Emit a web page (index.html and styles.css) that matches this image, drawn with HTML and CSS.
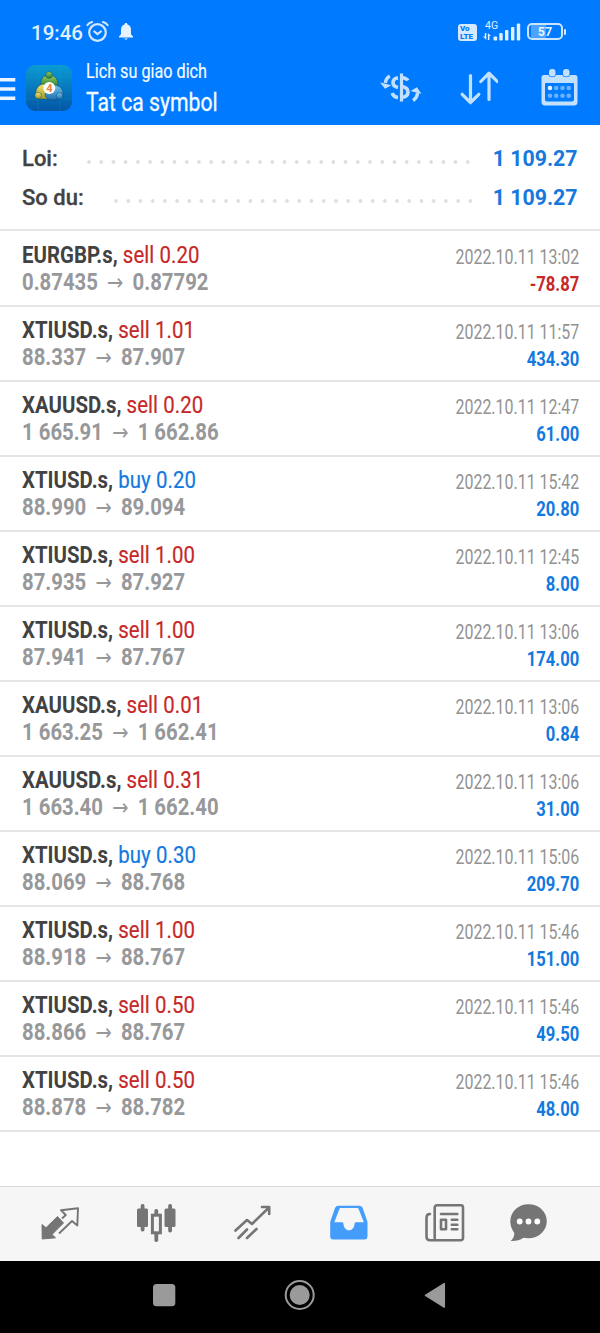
FILE: index.html
```html
<!DOCTYPE html>
<html lang="vi">
<head>
<meta charset="utf-8">
<title>Lich su giao dich</title>
<link rel="stylesheet" href="styles.css">
</head>
<body>
<header class="top">
  <div class="status">
    <span class="clock">19:46</span>
    <svg class="alarm" width="24" height="24" viewBox="0 0 24 24" fill="none" stroke="#d3e8ff" stroke-width="2.2" stroke-linecap="round"><circle cx="11.500" cy="12.500" r="8.300"/><path d="M8.300 11.500l3.200 2.600 3.400-2.600"/><path d="M1.500 5Q3 2.800 6 2M21.500 5Q20 2.800 17 2"/></svg>
    <svg class="bell" width="14" height="18" viewBox="0 0 14 18" fill="#e6f3ff"><path d="M7 0c1 0 1.500.6 1.500 1.600C11 2.300 12 4.300 12 7v4.200l2 2.300v1H0v-1l2-2.300V7c0-2.700 1-4.700 3.500-5.400C5.500.6 6 0 7 0zM5.300 15.600h3.400c-.4 1.500-3 1.500-3.400 0z"/></svg>
    <span class="volte"><span>Vo</span><span>LTE</span></span>
    <span class="signal">
      <span class="net">4G</span>
      <svg width="38" height="19" viewBox="0 0 38 19" fill="#e0f0ff"><path d="M0 14.500h1.800V11h1.500v7zM8 14h-1.600v4H4.900v-7z"/><rect x="10.500" y="14.500" width="3.700" height="4" rx="1"/><rect x="16.300" y="11" width="3.400" height="7.500" rx="1"/><rect x="22" y="8" width="3.400" height="10.500" rx="1"/><rect x="28" y="5" width="3.400" height="13.500" rx="1"/><rect x="33.800" y="1.500" width="3.400" height="17" rx="1"/></svg>
    </span>
    <span class="battery"><span>57</span></span><span class="nub"></span>
  </div>
  <div class="bar">
    <svg class="menu" width="16" height="24" viewBox="0 0 16 24" fill="#e9f4ff"><path d="M0 0h15.300v3.600H0zM0 9.200h15.300v3.600H0zM0 18.500h15.300v3.600H0z"/></svg>
    <svg class="logo" width="46" height="46" viewBox="0 0 46 46">
      <defs>
        <linearGradient id="bg" x1="0" y1="0" x2="0" y2="1"><stop offset="0" stop-color="#0a9cd3"/><stop offset="1" stop-color="#0457a6"/></linearGradient>
        <linearGradient id="gr" x1="0" y1="0" x2="0" y2="1"><stop offset="0" stop-color="#a3d05a"/><stop offset="1" stop-color="#1f7a3c"/></linearGradient>
        <linearGradient id="ye" x1="0" y1="0" x2="0" y2="1"><stop offset="0" stop-color="#f0e46c"/><stop offset="1" stop-color="#a39a2a"/></linearGradient>
        <linearGradient id="bl" x1="0" y1="0" x2="0" y2="1"><stop offset="0" stop-color="#74c5ef"/><stop offset="1" stop-color="#1d6faf"/></linearGradient>
      </defs>
      <rect width="46" height="46" rx="9" fill="url(#bg)"/>
      <path d="M12 0v46M34 0v46M0 12h46M0 34h46" stroke="#1cb2dc" stroke-opacity=".3" stroke-width=".6"/>
      <g stroke="#06456f" stroke-opacity=".7" stroke-width=".7">
        <path d="M15 22c-1.500-7 2-12 8-12s10 5 9 12z" fill="url(#gr)"/><circle cx="23" cy="10" r="3.300" fill="url(#gr)"/>
        <path d="M22 34H13c-3 0-4-4-3-8s4-7 8-7l6 8z" fill="url(#ye)"/><circle cx="12.200" cy="30.500" r="3.300" fill="url(#ye)"/>
        <path d="M19 29l9-9c5 0 9 4 9 8 0 4-5 7-10 7-4 0-8-2-8-6z" fill="url(#bl)"/><circle cx="33.500" cy="31" r="3.300" fill="url(#bl)"/>
      </g>
      <circle cx="23.300" cy="23" r="6" fill="#fff"/>
      <text x="23.300" y="27" text-anchor="middle" class="four">4</text>
    </svg>
    <div class="titles"><div class="t1"><span>Lich su giao dich</span></div><div class="t2"><span>Tat ca symbol</span></div></div>
    <svg class="dollar" width="42" height="34" viewBox="0 0 42 34" fill="none" stroke="#c3e1ff"><path d="M21.500 2.500v28" stroke-width="3.200" stroke-linecap="butt"/><path d="M27.800 9.500Q26.500 7 22 6.700M22 15.500Q28 16.500 28 21T22 26.500" stroke-width="3.600"/><path d="M18 6.700Q13 7.500 13 11.500t5 5M12.300 22q1 4 5.700 4.500" stroke-width="3.600"/><path d="M9.800 5Q6 7 5.300 12M33 29.500Q37 27 37.500 22" stroke-width="3.400"/><path d="M0 11.500l5 6.200 6.300-3.500zM41.500 23l-4.500-6.700-6.500 3.700z" fill="#c3e1ff" stroke="none"/></svg>
    <svg class="sort" width="38" height="34" viewBox="0 0 38 34" fill="none" stroke="#c3e1ff" stroke-width="3.200" stroke-linecap="round" stroke-linejoin="round"><path d="M10.500 4.500v27M2.200 23.300l8.300 8.400 8.300-8.400M29 28.500V2.500M20.800 10.500L29 2.200l8.200 8.300"/></svg>
    <svg class="cal" width="37" height="38" viewBox="0 0 37 38"><path fill="#c3e1ff" fill-rule="evenodd" d="M3 7h4.500c1 3 6.500 3 7.500 0h6.500c1 3 6.500 3 7.500 0H34q2.500 0 2.500 2.500V34q0 3.500-3.500 3.500H4Q.5 37.500.5 34V9.500Q.5 7 3 7zM4 16v15.500q0 2 2 2h25q2 0 2-2V16q0-1-1-1H5q-1 0-1 1z"/><rect x="8" y="1" width="6.500" height="7.500" rx="3" fill="#c3e1ff"/><rect x="22" y="1" width="6.500" height="7.500" rx="3" fill="#c3e1ff"/><g fill="#69b2ff"><circle cx="9" cy="20" r="2.300" fill="#e4f2ff"/><circle cx="15.200" cy="20" r="2.300"/><circle cx="21.500" cy="20" r="2.300"/><circle cx="27.700" cy="20" r="2.300"/><circle cx="9" cy="27.700" r="2.300"/><circle cx="15.200" cy="27.700" r="2.300"/><circle cx="21.500" cy="27.700" r="2.300"/><circle cx="27.700" cy="27.700" r="2.300"/></g></svg>
  </div>
</header>
<section class="summary">
  <div class="sum"><span class="label loi">Loi:</span><i class="dots d32"></i><b>1 109.27</b></div>
  <div class="sum"><span class="label du">So du:</span><i class="dots d30"></i><b>1 109.27</b></div>
</section>
<main class="deals">
  <div class="deal first"><div class="l"><p class="sym"><b>EURGBP.s,</b> <span class="sell">sell 0.20</span></p><p class="price">0.87435<i>→</i>0.87792</p></div><div class="r"><p class="date">2022.10.11 13:02</p><p class="val neg">-78.87</p></div></div>
  <div class="deal"><div class="l"><p class="sym"><b>XTIUSD.s,</b> <span class="sell">sell 1.01</span></p><p class="price">88.337<i>→</i>87.907</p></div><div class="r"><p class="date">2022.10.11 11:57</p><p class="val">434.30</p></div></div>
  <div class="deal"><div class="l"><p class="sym"><b>XAUUSD.s,</b> <span class="sell">sell 0.20</span></p><p class="price">1 665.91<i>→</i>1 662.86</p></div><div class="r"><p class="date">2022.10.11 12:47</p><p class="val">61.00</p></div></div>
  <div class="deal"><div class="l"><p class="sym"><b>XTIUSD.s,</b> <span class="buy">buy 0.20</span></p><p class="price">88.990<i>→</i>89.094</p></div><div class="r"><p class="date">2022.10.11 15:42</p><p class="val">20.80</p></div></div>
  <div class="deal"><div class="l"><p class="sym"><b>XTIUSD.s,</b> <span class="sell">sell 1.00</span></p><p class="price">87.935<i>→</i>87.927</p></div><div class="r"><p class="date">2022.10.11 12:45</p><p class="val">8.00</p></div></div>
  <div class="deal"><div class="l"><p class="sym"><b>XTIUSD.s,</b> <span class="sell">sell 1.00</span></p><p class="price">87.941<i>→</i>87.767</p></div><div class="r"><p class="date">2022.10.11 13:06</p><p class="val">174.00</p></div></div>
  <div class="deal"><div class="l"><p class="sym"><b>XAUUSD.s,</b> <span class="sell">sell 0.01</span></p><p class="price">1 663.25<i>→</i>1 662.41</p></div><div class="r"><p class="date">2022.10.11 13:06</p><p class="val">0.84</p></div></div>
  <div class="deal"><div class="l"><p class="sym"><b>XAUUSD.s,</b> <span class="sell">sell 0.31</span></p><p class="price">1 663.40<i>→</i>1 662.40</p></div><div class="r"><p class="date">2022.10.11 13:06</p><p class="val">31.00</p></div></div>
  <div class="deal"><div class="l"><p class="sym"><b>XTIUSD.s,</b> <span class="buy">buy 0.30</span></p><p class="price">88.069<i>→</i>88.768</p></div><div class="r"><p class="date">2022.10.11 15:06</p><p class="val">209.70</p></div></div>
  <div class="deal"><div class="l"><p class="sym"><b>XTIUSD.s,</b> <span class="sell">sell 1.00</span></p><p class="price">88.918<i>→</i>88.767</p></div><div class="r"><p class="date">2022.10.11 15:46</p><p class="val">151.00</p></div></div>
  <div class="deal"><div class="l"><p class="sym"><b>XTIUSD.s,</b> <span class="sell">sell 0.50</span></p><p class="price">88.866<i>→</i>88.767</p></div><div class="r"><p class="date">2022.10.11 15:46</p><p class="val">49.50</p></div></div>
  <div class="deal"><div class="l"><p class="sym"><b>XTIUSD.s,</b> <span class="sell">sell 0.50</span></p><p class="price">88.878<i>→</i>88.782</p></div><div class="r"><p class="date">2022.10.11 15:46</p><p class="val">48.00</p></div></div>
</main>
<nav class="tabs">
  <svg width="38" height="34" viewBox="0 0 38 34"><path fill="#757575" stroke="#757575" stroke-linejoin="round" d="M1 17.500l4 3.300L16.500 9.500l6 6.500L11 27.500l3.500 3.300L1.200 32z"/><path d="M18 26.500L31 14l5.300 4.500L37 1.200 20 3.300 24.800 8 21 11.500" fill="none" stroke="#757575" stroke-width="1.900" stroke-linejoin="round"/></svg>
  <svg width="40" height="39" viewBox="0 0 40 39"><g fill="#757575"><rect x="0" y="4.500" width="11" height="18.500" rx="1.500"/><rect x="3.700" y="0" width="3.800" height="27.500" rx="1.700"/><rect x="27.500" y="4.500" width="11" height="18.500" rx="1.500"/><rect x="31.200" y="0" width="3.800" height="28.500" rx="1.700"/><rect x="17.400" y="5" width="3.800" height="6" rx="1.700"/><rect x="17.400" y="28.500" width="3.800" height="9.500" rx="1.700"/></g><rect x="15.400" y="11.200" width="8" height="17.600" fill="none" stroke="#757575" stroke-width="3"/></svg>
  <svg width="38" height="36" viewBox="0 0 38 36" fill="none" stroke="#757575" stroke-width="2.600" stroke-linecap="round" stroke-linejoin="round"><path d="M1.500 25.500L13 15l5 4L35 2.500M28 2h7.200V9M4.500 33l8.500-8.500M13 33l9.500-9"/></svg>
  <svg width="38" height="36" viewBox="0 0 38 36"><path fill="#449dfb" fill-rule="evenodd" d="M8.500.7h20.700q2.600 0 3.500 2.300l4 11.500q.8 2 .8 4V31q0 3.500-3 3.500H3.200q-3 0-3-3.500V18.500q0-2 .8-4L5 3Q6 .7 8.500.7zM9.500 3.800L4.300 17.200h8c1 0 1 1 1.200 2 1 8 10 8 11 0 .2-1 .2-2 1.200-2h8.200L28.500 3.800q-.3-.8-1.200-.8H10.700q-.9 0-1.200.8z"/></svg>
  <svg width="40" height="38" viewBox="0 0 40 38" fill="none" stroke="#757575" stroke-width="2.600" stroke-linecap="round" stroke-linejoin="round"><path d="M12.200 1.300h24Q38 1.300 38 3.800v29.900q0 2.500-2.500 2.500H5q-3.500 0-3.500-3.500V14q0-4 3.500-4M9.700 35.500V3.800q0-2.500 2.500-2.500M16 10h16.300M26.800 15.800h5.500M26.800 20.800h5.500M26.800 25.300h5.500"/><rect x="16" y="15.800" width="5" height="9.500"/></svg>
  <svg width="38" height="38" viewBox="0 0 38 38"><path fill="#757575" d="M18.500.2c10.500 0 18.300 7.500 18.300 17s-8.300 17-18.300 17q-3 0-5-.4Q8.500 37.400.7 37.100 4.500 33.400 4.300 28.900.3 23.400.3 17.400C.3 7.700 8 .2 18.500.2z"/><g fill="#fff"><circle cx="9.700" cy="17.500" r="2.900"/><circle cx="18.500" cy="17.500" r="2.900"/><circle cx="27.300" cy="17.500" r="2.900"/></g></svg>
</nav>
<footer class="sys">
  <svg width="600" height="72" viewBox="0 0 600 72" fill="#9a9a9a"><rect x="153" y="23" width="22.300" height="22.300" rx="3.500"/><circle cx="299.700" cy="34" r="10"/><circle cx="299.700" cy="34" r="14" fill="none" stroke="#9a9a9a" stroke-width="2"/><path d="M425.500 34.300L444.300 22.600v23.400z" stroke="#9a9a9a" stroke-width="1.500" stroke-linejoin="round"/></svg>
</footer>
</body>
</html>
```
FILE: styles.css
```css
* { box-sizing: border-box; }
body { margin: 0; width: 600px; height: 1333px; display: flex; flex-direction: column; background: #fff; font-family: Roboto, "Liberation Sans", sans-serif; color: #424242; overflow: hidden; }
p { margin: 0; white-space: pre; }
svg { flex: none; display: block; }
.top { height: 125px; background: #007bff; color: #f4faff; }
.status { height: 61px; display: flex; padding: 20px 0 0 31px; align-items: flex-start; }
.clock { width: 55px; font-size: 20.5px; line-height: 26px; font-weight: 500; color: #e0f0ff; }
.bell { margin: 3px 0 0 9px; }
.volte { width: 19px; height: 17px; margin: 4px 0 0 325px; border-radius: 3px; background: #d6eaff; color: #007bff; font-size: 8px; font-weight: 900; line-height: 7.5px; padding: 1px 2px; display: flex; flex-direction: column; }
.signal { position: relative; width: 38px; margin: 2px 0 0 6px; }
.net { position: absolute; left: 2px; top: -1px; font-size: 10.5px; line-height: 10px; color: #e0f0ff; }
.battery { width: 36px; height: 17px; margin: 3px 0 0 6px; border: 2px solid #cbe4ff; border-radius: 5px; display: flex; justify-content: center; align-items: center; font-size: 12.500px; font-weight: 700; color: #e6f3ff; background: linear-gradient(90deg, #007bff 2px, #4ba3ff 2px, #4ba3ff 17px, #007bff 17px); }
.nub { width: 2px; height: 6px; margin: 9px 0 0 1px; background: #d6eaff; border-radius: 1px; }
.bar { height: 64px; display: flex; align-items: flex-start; }
.menu { margin-top: 17px; }
.logo { margin: 4px 0 0 10px; }
.four { font: 700 11px Roboto, sans-serif; fill: #e8853b; }
.titles { width: 295px; padding-left: 14px; white-space: nowrap; }
.t1 { font-size: 20px; line-height: 24px; margin-top: -2px; transform: scaleX(.81); transform-origin: left; -webkit-text-stroke: .2px; }
.t2 { font-size: 26px; line-height: 34px; margin-top: 2px; transform: scaleX(.815); transform-origin: left; -webkit-text-stroke: .3px; }
.dollar { margin: 10px 0 0 13px; }
.sort { margin: 10px 0 0 38px; }
.cal { margin: 7px 0 0 43px; }
.summary { height: 106px; padding: 14px 22px 0 22px; border-bottom: 2px solid #e6e6e6; }
.sum { display: flex; height: 39px; line-height: 39px; font-size: 22px; }
.label { font-weight: 500; -webkit-text-stroke: .3px; }
.loi { width: 61px; }
.du { width: 88px; }
.sum b { margin-left: auto; color: #1779dd; font-weight: 700; transform: scaleX(.97); transform-origin: right; }
.dots { height: 4px; margin-top: 21px; background: radial-gradient(circle at 6px 2px, #dedede 1.500px, transparent 2.200px) 0 0 / 12.230px 4px repeat-x; }
.d32 { width: 391px; }
.d30 { width: 367px; }
.deal { height: 75px; padding: 11px 21px 0 22px; border-bottom: 2px solid #e6e6e6; display: flex; justify-content: space-between; }
.first { height: 76px; padding-top: 12px; }
.l { margin-top: -1px; }
.l p { transform: scaleX(.85); transform-origin: left; line-height: 27px; height: 27px; font-size: 24px; }
.sym b { font-weight: 700; }
.sell, .buy { -webkit-text-stroke: .2px; letter-spacing: .1px; }
.sell { color: #c62828; }
.buy { color: #1279df; }
.l .price { color: #97989a; font-weight: 700; transform: scaleX(.847); }
.price i { display: inline-block; width: 41px; text-align: center; font: 400 23px "DejaVu Sans", sans-serif; line-height: 20px; }
.r p { transform: scaleX(.83); transform-origin: right; text-align: right; line-height: 27px; height: 27px; font-size: 20px; }
.r .date { color: #929292; padding-top: 1px; transform: scaleX(.797); }
.r .val { color: #1279df; font-weight: 700; padding-top: 1px; }
.r .neg { color: #c62828; }
.tabs { height: 75px; margin-top: auto; background: #f6f6f6; border-top: 1px solid #dcdcdc; display: flex; align-items: flex-start; padding: 17px 0 0 41px; }
.tabs svg:nth-child(1) { margin: 3px 58px 0 0; }
.tabs svg:nth-child(2) { margin-right: 57px; }
.tabs svg:nth-child(3) { margin: 1px 58px 0 0; }
.tabs svg:nth-child(4) { margin: 1px 57px 0 0; }
.tabs svg:nth-child(5) { margin-right: 45px; }
.sys { height: 72px; background: #000; }
```
